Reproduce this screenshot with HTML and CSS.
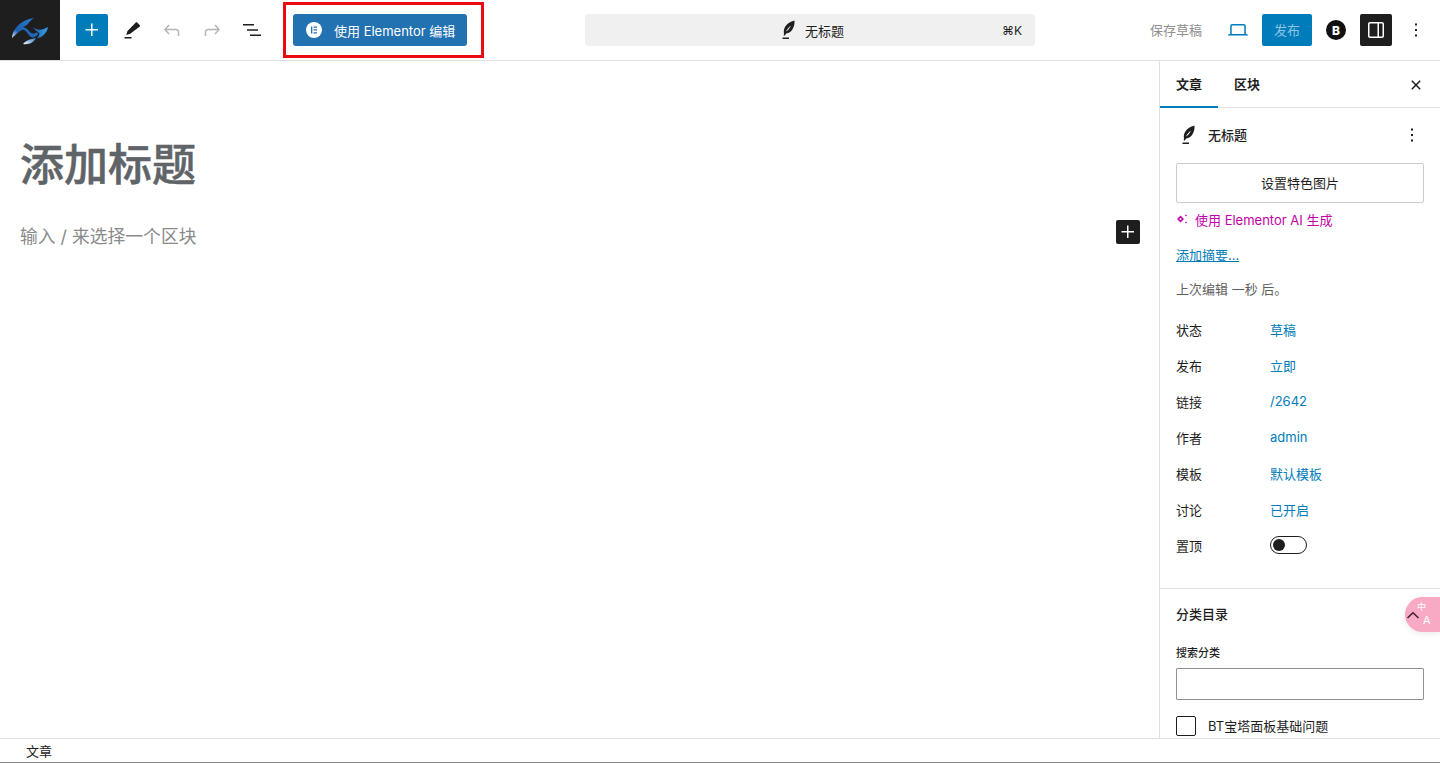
FILE: index.html
```html
<!DOCTYPE html>
<html lang="zh-CN">
<head>
<meta charset="utf-8">
<title>添加标题</title>
<link rel="stylesheet" href="styles.css">
</head>
<body>
<div class="app">
  <header class="topbar">
    <div class="left">
      <a class="logo">
        <svg width="60" height="60" viewBox="0 0 60 60">
          <defs>
            <linearGradient id="g" x1="0" y1="1" x2="1" y2="0"><stop offset="0" stop-color="#e4edf7"/><stop offset=".28" stop-color="#1c5fb0"/><stop offset="1" stop-color="#2a7fd0"/></linearGradient>
            <linearGradient id="h" x1="0" y1="0" x2="1" y2="0"><stop offset="0" stop-color="#1c5fb0"/><stop offset="1" stop-color="#35a0e6"/></linearGradient>
            <linearGradient id="k" x1="0" y1="1" x2="1" y2="0"><stop offset="0" stop-color="#f2f6fb"/><stop offset="1" stop-color="#2a78c8"/></linearGradient>
          </defs>
          <path fill="url(#g)" d="M12 38C12 30 20 20 34 18C31 20 29 22 27 25L23 27C27 28 28 30 30 32C32 34 35 34 37 32L38 34C36 37 33 38 31 37C28 35 27 31 24 30C21 29 18 33 12 38Z"/>
          <path fill="url(#h)" d="M33 27C37 31 43 30 48 27C47 33 42 38 37 38C40 35 40 33 38 32C36 31 34 29 33 27Z"/>
          <path fill="url(#k)" d="M23 44C25 41 30 39 36 38C34 42 29 45 23 44Z"/>
        </svg>
      </a>
      <div class="tools">
        <button class="btn-add"><svg width="24" height="24" viewBox="0 0 24 24"><path fill="#fff" d="M11 12.500V18h1.500v-5.500H18V11h-5.500V5.500H11V11H5.500v1.500z"/></svg></button>
        <button class="tool"><svg width="24" height="24" viewBox="0 0 24 24"><path fill="#1e1e1e" d="M19.800 7.200l-2.600-2.600c-.4-.4-1-.4-1.400 0L7.500 13l-1.300 4 4 -1.200 9.600-7.200c.5-.4.400-1 0-1.400zM4.500 19h7v1.500h-7z"/></svg></button>
        <button class="tool"><svg width="24" height="24" viewBox="0 0 24 24"><path fill="#b4b4b4" d="M18.300 11.700c-.6-.6-1.400-.9-2.300-.9H6.700l2.900-3.300-1.100-1-4.500 5L8.500 16.500l1-1-3-3.200H16c.5 0 .9.200 1.300.5.300.4.500.8.500 1.300V18h1.500v-3.900c0-.9-.4-1.800-1-2.400z"/></svg></button>
        <button class="tool"><svg width="24" height="24" viewBox="0 0 24 24"><path fill="#b4b4b4" d="M15.600 6.500l-1.100 1 2.900 3.300H8c-.9 0-1.700.3-2.300.9-.6.600-1 1.500-1 2.400V18h1.500v-3.900c0-.5.200-.9.500-1.300.4-.3.800-.5 1.300-.5h9.500l-3 3.200 1 1 4.500-5.100z"/></svg></button>
        <button class="tool"><svg width="24" height="24" viewBox="0 0 24 24"><path fill="#1e1e1e" d="M3 6h11v1.500H3zM7 11.200h11v1.500H7zM10 16.500h11V18H10z"/></svg></button>
      </div>
      <div class="el-wrap">
        <button class="btn-elementor">
          <svg width="16" height="16" viewBox="0 0 16 16"><circle cx="8" cy="8" r="8" fill="#fff"/><path fill="#2271b1" d="M5 4.500h1.300v7H5zM7.500 4.500H11v1.300H7.500zM7.500 7.300H11v1.300H7.500zM7.500 10.200H11v1.300H7.500z"/></svg>
          <span>使用 Elementor 编辑</span>
        </button>
      </div>
    </div>
    <div class="center">
      <div class="command">
        <span class="cmd-title">
          <svg width="24" height="24" viewBox="0 0 24 24"><path fill="#1e1e1e" fill-rule="evenodd" d="M8 16C7 10 10 5 18.500 2.500C19 9 15.500 15 10.200 15.500L8.800 17.500H7.600zM10 13.500C12 12.500 14 9.500 15 7.500C13 9 11 11 10 13.500zM6.500 19.500H13V21H6.500z"/></svg>
          无标题
        </span>
        <span class="cmd-key">⌘K</span>
      </div>
    </div>
    <div class="right">
      <span class="save">保存草稿</span>
      <button class="tool view"><svg width="24" height="24" viewBox="0 0 24 24"><path fill="#007cba" d="M20.500 16h-.7V8c0-1.100-.9-2-2-2H6.200c-1.100 0-2 .9-2 2v8h-.7c-.8 0-1.500.7-1.500 1.500h20c0-.8-.7-1.500-1.500-1.500zM5.700 8c0-.3.200-.5.500-.5h11.600c.3 0 .5.200.5.500v8H5.700V8z"/></svg></button>
      <button class="btn-publish">发布</button>
      <span class="b-badge">B</span>
      <button class="btn-panel"><svg width="24" height="24" viewBox="0 0 24 24"><path fill="#fff" d="M18 4H6c-1.100 0-2 .9-2 2v12c0 1.100.9 2 2 2h12c1.100 0 2-.9 2-2V6c0-1.100-.9-2-2-2zM5.500 18V6c0-.3.200-.5.500-.5h7.500v13H6c-.3 0-.5-.2-.5-.5zm13 0c0 .3-.2.500-.5.500h-3v-13h3c.3 0 .5.200.5.500v12z"/></svg></button>
      <button class="tool more"><svg width="24" height="24" viewBox="0 0 24 24"><path fill="#1e1e1e" d="M11 5.500h2v2h-2zM11 11h2v2h-2zM11 16.500h2v2h-2z"/></svg></button>
    </div>
  </header>

  <div class="workspace">
    <main class="editor">
      <h1 class="post-title">添加标题</h1>
      <div class="para-row">
        <p class="placeholder">输入 / 来选择一个区块</p>
        <button class="inline-add"><svg width="24" height="24" viewBox="0 0 24 24"><path fill="#fff" d="M11 12.500V18h1.500v-5.500H18V11h-5.500V5.500H11V11H5.500v1.500z"/></svg></button>
      </div>
    </main>

    <aside class="sidebar">
      <div class="tabs">
        <span class="tab active">文章</span>
        <span class="tab">区块</span>
        <svg class="close" width="24" height="24" viewBox="0 0 24 24"><path fill="none" stroke="#1e1e1e" stroke-width="1.500" d="M7.800 7.800l8.400 8.400M16.200 7.800l-8.400 8.400"/></svg>
      </div>
      <section class="panel-post">
        <div class="post-head">
          <svg width="24" height="24" viewBox="0 0 24 24"><path fill="#1e1e1e" fill-rule="evenodd" d="M8 16C7 10 10 5 18.500 2.500C19 9 15.500 15 10.200 15.500L8.800 17.500H7.600zM10 13.500C12 12.500 14 9.500 15 7.500C13 9 11 11 10 13.500zM6.500 19.500H13V21H6.500z"/></svg>
          <strong>无标题</strong>
          <svg class="head-more" width="24" height="24" viewBox="0 0 24 24"><path fill="#1e1e1e" d="M11 5.500h2v2h-2zM11 11h2v2h-2zM11 16.500h2v2h-2z"/></svg>
        </div>
        <button class="featured">设置特色图片</button>
        <div class="ai-link">
          <svg width="12" height="12" viewBox="0 0 12 12"><path fill="#c400a8" fill-rule="evenodd" d="M4.500 2.500L8 6 4.500 9.500 1 6zM4.500 4.700L3.200 6l1.300 1.300L5.800 6zM10 1.500l1 1-1 1-1-1zM10 8.500l1 1-1 1-1-1z"/></svg>
          使用 Elementor AI 生成
        </div>
        <a class="excerpt">添加摘要...</a>
        <div class="edited">上次编辑 一秒 后。</div>
        <dl class="meta">
          <div class="meta-row"><dt>状态</dt><dd>草稿</dd></div>
          <div class="meta-row"><dt>发布</dt><dd>立即</dd></div>
          <div class="meta-row"><dt>链接</dt><dd>/2642</dd></div>
          <div class="meta-row"><dt>作者</dt><dd>admin</dd></div>
          <div class="meta-row"><dt>模板</dt><dd>默认模板</dd></div>
          <div class="meta-row"><dt>讨论</dt><dd>已开启</dd></div>
          <div class="meta-row"><dt>置顶</dt><dd><span class="toggle"><i></i></span></dd></div>
        </dl>
      </section>
      <section class="panel-cat">
        <h2>分类目录</h2>
        <label class="search-label">搜索分类</label>
        <div class="search-input"></div>
        <div class="check"><span class="box"></span><span class="check-text">BT宝塔面板基础问题</span></div>
      </section>
    </aside>
  </div>

  <footer class="statusbar">文章</footer>

  <div class="red-box"></div>
  <div class="translate">
    <svg class="chev" width="14" height="8" viewBox="0 0 14 8"><path fill="none" stroke="#3a2030" stroke-width="1.500" d="M1.500 7L7 1.800 12.500 7"/></svg>
    <span class="t-zh">中</span>
    <span class="t-en">A</span>
  </div>
</div>
</body>
</html>
```
FILE: styles.css
```css
* { box-sizing: border-box; }
html, body { margin: 0; height: 100%; overflow: hidden; background: #fff; }
body { font-family: Inter, "Noto Sans CJK SC", sans-serif; font-size: 13px; color: #1e1e1e; }
button { font: inherit; border: 0; background: none; padding: 0; margin: 0; }
svg { display: block; flex: none; }
.app { position: relative; display: flex; flex-direction: column; height: 763px; }

.topbar { flex: none; height: 61px; display: grid; grid-template-columns: 585px 450px 1fr; border-bottom: 1px solid #e0e0e0; }
.left { display: flex; align-items: center; }
.logo { width: 60px; height: 60px; background: #1e1e1e; display: flex; align-items: center; justify-content: center; }
.tools { display: flex; align-items: center; margin-left: 16px; }
.btn-add { width: 32px; height: 32px; background: #007cba; border-radius: 2px; display: flex; align-items: center; justify-content: center; margin-right: 4px; }
.tool { width: 40px; height: 32px; display: flex; align-items: center; justify-content: center; }
.el-wrap { margin-left: 21px; }
.btn-elementor { width: 174px; height: 32px; background: #2271b1; color: #fff; border-radius: 3px; display: flex; align-items: center; gap: 12px; padding-left: 13px; font-size: 13px; white-space: nowrap; }

.center { display: flex; align-items: center; }
.command { width: 450px; height: 32px; background: #f0f0f0; border-radius: 4px; display: grid; grid-template-columns: 1fr auto 1fr; align-items: center; padding-right: 13px; font-size: 13px; }
.cmd-title { grid-column: 2; display: flex; align-items: center; gap: 5px; margin-left: 13px; }
.cmd-key { grid-column: 3; justify-self: end; font-size: 12px; color: #1e1e1e; }

.right { display: flex; align-items: center; padding-left: 115px; }
.save { color: #8f8f8f; white-space: nowrap; width: 52px; padding-bottom: 2px; }
.view { width: 32px; margin-left: 20px; }
.btn-publish { width: 50px; height: 32px; margin-left: 8px; padding-bottom: 2px; background: #007cba; color: #8cc4e4; border-radius: 2px; }
.b-badge { width: 20px; height: 20px; margin-left: 14px; border-radius: 50%; background: #111; color: #fff; font-size: 12px; font-weight: 800; display: flex; align-items: center; justify-content: center; }
.btn-panel { width: 32px; height: 32px; margin-left: 14px; background: #1e1e1e; border-radius: 2px; display: flex; align-items: center; justify-content: center; }
.more { width: 24px; margin-left: 12px; }

.workspace { flex: 1; min-height: 0; display: flex; }
.editor { flex: 1; min-width: 0; padding: 72px 19px 0 20px; }
.post-title { margin: 0; font-size: 44px; line-height: 64px; font-weight: 500; color: #5f6468; -webkit-text-stroke: .5px #5f6468; }
.para-row { display: flex; align-items: flex-start; justify-content: space-between; margin-top: 23px; }
.placeholder { margin: 0; font-size: 17.800px; line-height: 34px; color: #8a8a8a; }
.inline-add { width: 24px; height: 24px; background: #1e1e1e; border-radius: 2px; }

.sidebar { width: 281px; flex: none; border-left: 1px solid #e0e0e0; overflow: hidden; }
.tabs { position: relative; height: 47px; display: flex; border-bottom: 1px solid #e0e0e0; }
.tab { width: 58px; padding-left: 16px; line-height: 47px; font-weight: 600; font-size: 13px; height: 47px; }
.tab.active { border-bottom: 2px solid #007cba; }
.close { position: absolute; right: 12px; top: 12px; }
.panel-post { padding: 15px 16px 0; height: 481px; border-bottom: 1px solid #e0e0e0; }
.post-head { display: flex; align-items: center; height: 24px; margin-bottom: 16px; font-size: 13px; }
.post-head > svg:first-child { margin-right: 8px; }
.post-head strong { font-weight: 500; padding-bottom: 2px; }
.head-more { margin-left: auto; }
.featured { display: block; width: 248px; height: 40px; padding-bottom: 2px; border: 1px solid #ccc; border-radius: 2px; background: #fff; color: #1e1e1e; }
.ai-link { display: flex; align-items: center; gap: 7px; height: 20px; margin-top: 6px; color: #c400a8; white-space: nowrap; }
.excerpt { display: block; margin-top: 17px; height: 18px; line-height: 18px; color: #007cba; text-decoration: underline; }
.edited { margin-top: 16px; height: 18px; line-height: 18px; color: #5f5f5f; }
.meta { margin: 13px 0 0; }
.meta-row { display: flex; align-items: center; height: 36px; }
.meta-row dt { width: 94px; color: #1e1e1e; }
.meta-row dd { margin: 0; color: #007cba; }
.toggle { display: block; width: 37px; height: 18px; border: 1px solid #1e1e1e; border-radius: 9px; padding: 2px; }
.toggle i { display: block; width: 12px; height: 12px; border-radius: 50%; background: #1e1e1e; }
.panel-cat { padding: 15px 16px 0; }
.panel-cat h2 { margin: 0; font-size: 13px; font-weight: 500; line-height: 20px; }
.search-label { display: block; margin-top: 21px; font-size: 11px; font-weight: 500; line-height: 16px; }
.search-input { width: 248px; height: 32px; margin-top: 7px; border: 1px solid #8c8f94; border-radius: 1px; }
.check { display: flex; align-items: flex-start; gap: 12px; margin-top: 16px; white-space: nowrap; }
.box { width: 20px; height: 20px; border: 1px solid #1e1e1e; border-radius: 2px; }
.check-text { line-height: 20px; }

.statusbar { flex: none; height: 25px; border-top: 1px solid #e0e0e0; border-bottom: 1px solid #8a8a8a; padding-left: 26px; line-height: 24px; font-size: 13px; background: #fff; }

.red-box { position: absolute; left: 283px; top: 2px; width: 201px; height: 56px; border: 3px solid #ea0a12; }
.translate { position: absolute; left: 1405px; top: 597px; width: 35px; height: 35px; border-radius: 18px 0 0 18px; background: #f8a9c4; box-shadow: 0 2px 6px rgba(0,0,0,.08); color: #fff; }
.chev { position: absolute; left: 1px; top: 14px; }
.t-zh { position: absolute; left: 12px; top: 3px; font-size: 9px; line-height: 13px; }
.t-en { position: absolute; left: 18px; top: 17px; font-size: 11px; line-height: 13px; }
```
